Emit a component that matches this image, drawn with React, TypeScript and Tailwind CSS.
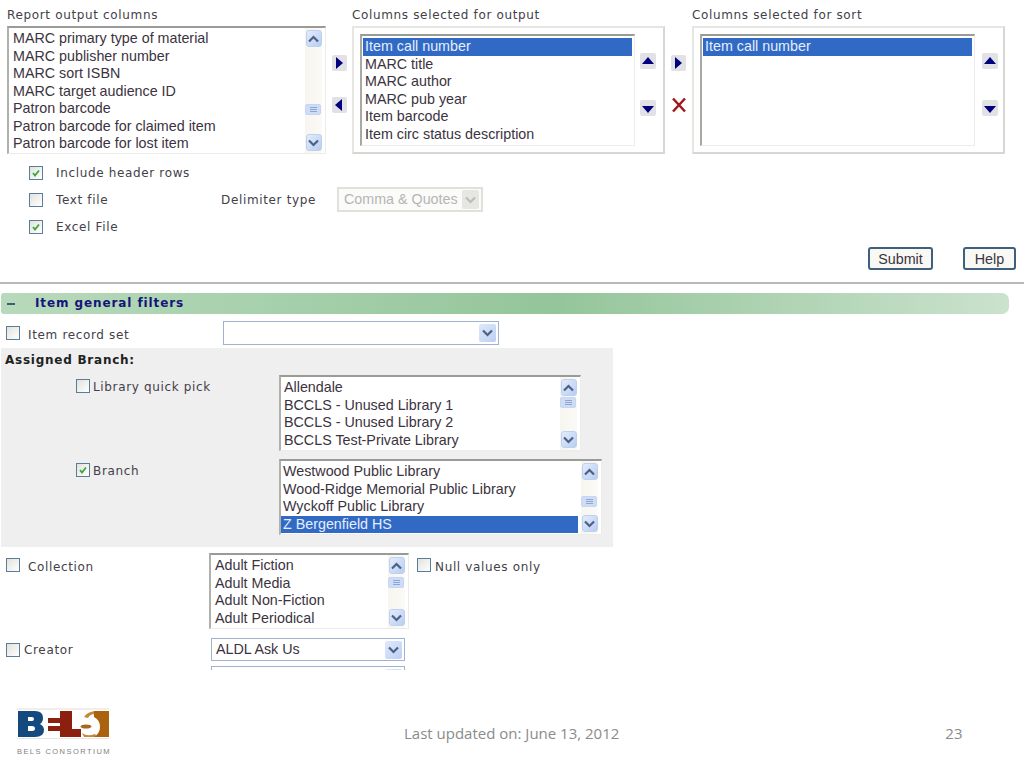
import React from "react";

const V = "font-['DejaVu_Sans',sans-serif]";
const A = "font-['Liberation_Sans',Arial,sans-serif]";

function Chevron({ up, muted }: { up?: boolean; muted?: boolean }) {
  return (
    <svg width="11" height="8" viewBox="0 0 11 8" fill="none">
      <path
        d={up ? "M1 6.5 L5.5 2 L10 6.5" : "M1 1.5 L5.5 6 L10 1.5"}
        stroke={muted ? "#bdbdb8" : "#4d6185"}
        strokeWidth="2.2"
      />
    </svg>
  );
}

function ScrollBtn({ up }: { up?: boolean }) {
  return (
    <div className="w-[16px] h-[17px] shrink-0 rounded-[3px] border border-[#bcd0f0] bg-gradient-to-br from-[#e3ecfc] to-[#b9cdf2] flex items-center justify-center">
      <Chevron up={up} />
    </div>
  );
}

function Scrollbar({ thumbTop }: { thumbTop: number }) {
  return (
    <div className="relative w-[17px] h-full shrink-0 mr-[3px] py-[2px] flex flex-col justify-between items-center bg-gradient-to-r from-[#f6f5ef] to-[#fbfaf6]">
      <ScrollBtn up />
      <div
        className="absolute left-0 w-[16px] h-[11px] rounded-[2px] bg-[#cfdcf6] border border-[#c6d6f4] flex flex-col items-center justify-center gap-[1px]"
        style={{ top: thumbTop }}
      >
        <div className="w-[7px] h-[1px] bg-[#8ea6d0]" />
        <div className="w-[7px] h-[1px] bg-[#8ea6d0]" />
        <div className="w-[7px] h-[1px] bg-[#8ea6d0]" />
      </div>
      <ScrollBtn />
    </div>
  );
}

function Items({ items, selected }: { items: string[]; selected?: string }) {
  return (
    <div className={`${A} text-[14.3px] leading-[17.5px] text-[#3b3340] whitespace-nowrap`}>
      {items.map((t) => (
        <div key={t} className={t === selected ? "bg-[#316ac5] text-[#e6eefc] px-[2px]" : "px-[2px]"}>
          {t}
        </div>
      ))}
    </div>
  );
}

function ScrollList({
  className,
  items,
  selected,
  thumbTop,
  pad,
}: {
  className: string;
  items: string[];
  selected?: string;
  thumbTop: number;
  pad: string;
}) {
  return (
    <div className={`flex bg-white border-t-2 border-l-2 border-t-[#9a9a96] border-l-[#b0b0ac] border-r border-b border-r-[#ececea] border-b-[#ececea] ${className}`}>
      <div className={`flex-1 min-w-0 ${pad}`}>
        <Items items={items} selected={selected} />
      </div>
      <Scrollbar thumbTop={thumbTop} />
    </div>
  );
}

function Check({ on, className = "" }: { on?: boolean; className?: string }) {
  return (
    <div className={`w-[14px] h-[14px] shrink-0 border border-[#5c7c9c] bg-gradient-to-br from-[#e2e2dc] to-white flex items-center justify-center ${className}`}>
      {on && (
        <svg width="10" height="10" viewBox="0 0 10 10" fill="none">
          <path d="M2 5 L4 7.5 L8 2.5" stroke="#3fa63f" strokeWidth="1.8" />
        </svg>
      )}
    </div>
  );
}

function Label({ children, className = "" }: { children: React.ReactNode; className?: string }) {
  return <span className={`${V} text-[12px] tracking-[0.65px] text-[#44404a] whitespace-nowrap ${className}`}>{children}</span>;
}

type Dir = "up" | "down" | "left" | "right";
const tri: Record<Dir, string> = {
  up: "M2 10 L8 3 L14 10 Z",
  down: "M2 5 L14 5 L8 12 Z",
  left: "M10 3 L10 15 L3 9 Z",
  right: "M4 3 L4 15 L11 9 Z",
};

function ArrowBtn({ dir }: { dir: Dir }) {
  const wide = dir === "up" || dir === "down";
  return (
    <div className={`${wide ? "w-[16px] h-[16px]" : "w-[15px] h-[16px]"} rounded-[2px] bg-[#e2e2e6] flex items-center justify-center`}>
      <svg width={wide ? 16 : 15} height={wide ? 15 : 18} viewBox={wide ? "0 0 16 15" : "0 0 15 18"}>
        <path d={tri[dir]} fill="#00007f" />
      </svg>
    </div>
  );
}

function SelectBox({ className, value }: { className: string; value?: string }) {
  return (
    <div className={`flex items-center justify-between border border-[#9fb3cf] bg-white pr-[2px] ${className}`}>
      <span className={`${A} text-[14.3px] text-[#3b3340] pl-[4px]`}>{value}</span>
      <div className="w-[17px] h-[18px] shrink-0 rounded-[2px] bg-gradient-to-br from-[#dfe9fb] to-[#bccff3] flex items-center justify-center">
        <Chevron />
      </div>
    </div>
  );
}

function SortPanel({ items, selected, mid }: { items: string[]; selected: string; mid?: boolean }) {
  return (
    <div className="h-[128px] w-[313px] border-2 border-[#e6e6e2] border-r-[#d6d6d2] border-b-[#d6d6d2] flex pl-[6px] pt-[6px] bg-white">
      <div className="w-[275px] h-[112px] bg-white border-t-2 border-l-2 border-t-[#9a9a96] border-l-[#a8a8a4] border-r border-b border-r-[#ececea] border-b-[#ececea] pl-[1px] pt-[2px] pr-[2px] shrink-0">
        <Items items={items} selected={selected} />
      </div>
      <div className={`flex flex-col ${mid ? "ml-[5px]" : "ml-[7px]"} pt-[19px] gap-[31px]`}>
        <ArrowBtn dir="up" />
        <ArrowBtn dir="down" />
      </div>
    </div>
  );
}

function LogoMark() {
  return (
    <svg width="96" height="33" viewBox="0 0 96 33">
      <rect x="2" y="0.5" width="92" height="1" fill="#e6e0d8" />
      <rect x="2" y="30" width="92" height="1" fill="#e6e6e6" />
      <path
        fillRule="evenodd"
        d="M3 3 H20 Q28 3 28 10 Q28 14 25 16 Q29 18 29 22 Q29 29 20 29 H3 Z M13 9 V13 H17 Q19 13 19 11 Q19 9 17 9 Z M13 18 V23 H17 Q20 23 20 20.5 Q20 18 17 18 Z"
        fill="#154a7f"
      />
      <path d="M33 10 H45 V3 H57 V21 H66 V29 H45 V23 H33 V18 H45 V15 H33 Z" fill="#8c2010" />
      <path d="M69 9 Q72 4 80 3 V6 Q75 6 73 10 Z" fill="#c08a3a" />
      <ellipse cx="71" cy="18.5" rx="5.5" ry="2" fill="#a8691c" />
      <path d="M67 25 Q72 29 80 26 L82 29 H69 Z" fill="#c08a3a" />
      <path d="M79 3 H94 V29 H79 Q85 25 85 19 Q85 12 79 9 Z" fill="#ab620f" />
    </svg>
  );
}

export default function App() {
  return (
    <div className="w-[1024px] h-[768px] overflow-hidden bg-white flex flex-col">
      {/* top columns */}
      <div className="flex pl-[7px]">
        <div className="w-[319px] shrink-0">
          <div className="h-[26px] pt-[4px] leading-[18px]"><Label>Report output columns</Label></div>
          <ScrollList
            className="w-[319px] h-[128px]"
            pad="pl-[2px] pt-[2px]"
            thumbTop={76}
            items={[
              "MARC primary type of material",
              "MARC publisher number",
              "MARC sort ISBN",
              "MARC target audience ID",
              "Patron barcode",
              "Patron barcode for claimed item",
              "Patron barcode for lost item",
            ]}
          />
        </div>
        <div className="w-[26px] shrink-0 pt-[55px] pl-[6px] flex flex-col gap-[26px]">
          <ArrowBtn dir="right" />
          <ArrowBtn dir="left" />
        </div>
        <div className="w-[313px] shrink-0">
          <div className="h-[26px] pt-[4px] leading-[18px]"><Label>Columns selected for output</Label></div>
          <SortPanel
            mid
            selected="Item call number"
            items={["Item call number", "MARC title", "MARC author", "MARC pub year", "Item barcode", "Item circ status description"]}
          />
        </div>
        <div className="w-[27px] shrink-0 pt-[55px] pl-[6px] flex flex-col gap-[26px]">
          <ArrowBtn dir="right" />
          <svg width="16" height="16" viewBox="0 0 16 16" fill="none">
            <path d="M2 1.5 L14 14.5 M14 1.5 L2 14.5" stroke="#a01818" strokeWidth="2.5" />
          </svg>
        </div>
        <div className="w-[313px] shrink-0">
          <div className="h-[26px] pt-[4px] leading-[18px]"><Label>Columns selected for sort</Label></div>
          <SortPanel selected="Item call number" items={["Item call number"]} />
        </div>
      </div>

      {/* output options */}
      <div className="pl-[29px] pt-[5px] flex flex-col">
        <div className="h-[27px] flex items-center">
          <Check on />
          <Label className="ml-[13px]">Include header rows</Label>
        </div>
        <div className="h-[27px] flex items-center">
          <Check />
          <Label className="ml-[13px] w-[165px]">Text file</Label>
          <Label className="w-[116px]">Delimiter type</Label>
          <div className="w-[146px] h-[25px] border-2 border-[#e0e0dc] bg-[#fbfbf9] flex items-center justify-between pr-[2px]">
            <span className={`${A} text-[14.3px] text-[#b5b5b5] pl-[5px]`}>Comma &amp; Quotes</span>
            <div className="w-[17px] h-[19px] bg-[#e6e6e2] flex items-center justify-center rounded-[2px]">
              <Chevron muted />
            </div>
          </div>
        </div>
        <div className="h-[27px] flex items-center">
          <Check on />
          <Label className="ml-[13px]">Excel File</Label>
        </div>
      </div>

      {/* buttons */}
      <div className="mt-[7px] pr-[8px] flex justify-end gap-[30px]">
        <button className={`${A} w-[65px] h-[23px] rounded-[3px] border-2 border-[#3f5f7f] bg-[#f8f8f4] text-[14.3px] text-[#3b3340]`}>Submit</button>
        <button className={`${A} w-[53px] h-[23px] rounded-[3px] border-2 border-[#3f5f7f] bg-[#f8f8f4] text-[14.3px] text-[#3b3340]`}>Help</button>
      </div>

      <div className="mt-[12px] h-[2px] bg-[#b8b8b4] shrink-0" />

      {/* section header */}
      <div className="mt-[9px] ml-[1px] w-[1008px] h-[21px] shrink-0 rounded-l-[3px] rounded-r-[7px] bg-gradient-to-r from-[#b8dabc] via-[#94c59a] via-55% to-[#cbe2cd] flex items-center">
        <span className="ml-[6px] w-[8px] h-[2px] bg-[#3f5f70]" />
        <span className={`${V} ml-[20px] pb-[2px] text-[12px] font-bold tracking-[0.9px] text-[#14147a] whitespace-nowrap`}>Item general filters</span>
      </div>

      {/* item record set */}
      <div className="mt-[7px] h-[24px] flex items-center pl-[6px] shrink-0">
        <Check />
        <Label className="ml-[8px] w-[195px] mt-[3px]">Item record set</Label>
        <SelectBox className="w-[276px] h-[24px]" />
      </div>

      {/* assigned branch */}
      <div className="mt-[3px] ml-[1px] w-[612px] h-[199px] shrink-0 bg-[#efefef] pl-[4px] flex flex-col">
        <div className={`${V} h-[24px] leading-[24px] text-[12px] font-bold tracking-[0.75px] text-[#222]`}>Assigned Branch:</div>
        <div className="mt-[3px] flex">
          <div className="w-[274px] pl-[71px] pt-[2px] flex items-center h-[20px]">
            <Check />
            <Label className="ml-[3px] mt-[1px]">Library quick pick</Label>
          </div>
          <ScrollList
            className="w-[302px] h-[76px]"
            pad="pl-[1px] pt-[2px]"
            thumbTop={20}
            items={["Allendale", "BCCLS - Unused Library 1", "BCCLS - Unused Library 2", "BCCLS Test-Private Library"]}
          />
        </div>
        <div className="mt-[8px] flex">
          <div className="w-[274px] pl-[71px] pt-[2px] flex items-center h-[20px]">
            <Check on />
            <Label className="ml-[3px] mt-[1px]">Branch</Label>
          </div>
          <ScrollList
            className="w-[323px] h-[76px]"
            pad="pt-[2px] pr-[3px]"
            thumbTop={35}
            selected="Z Bergenfield HS"
            items={["Westwood Public Library", "Wood-Ridge Memorial Public Library", "Wyckoff Public Library", "Z Bergenfield HS"]}
          />
        </div>
      </div>

      {/* collection */}
      <div className="mt-[6px] pl-[6px] flex shrink-0 h-[76px]">
        <div className="w-[203px] flex items-center h-[24px]">
          <Check />
          <Label className="ml-[8px] mt-[3px]">Collection</Label>
        </div>
        <ScrollList
          className="w-[200px] h-[76px]"
          pad="pl-[2px] pt-[2px]"
          thumbTop={22}
          items={["Adult Fiction", "Adult Media", "Adult Non-Fiction", "Adult Periodical"]}
        />
        <div className="ml-[8px] flex items-center h-[24px]">
          <Check />
          <Label className="ml-[4px] mt-[3px]">Null values only</Label>
        </div>
      </div>

      {/* creator */}
      <div className="mt-[9px] pl-[6px] flex items-center h-[23px] shrink-0">
        <Check />
        <Label className="ml-[4px] w-[187px] mt-[1px]">Creator</Label>
        <SelectBox className="w-[194px] h-[23px]" value="ALDL Ask Us" />
      </div>
      <div className="mt-[5px] ml-[211px] h-[4px] overflow-hidden shrink-0">
        <SelectBox className="w-[194px] h-[23px]" />
      </div>

      {/* footer */}
      <div className="mt-[38px] pl-[15px] flex items-start">
        <div className="w-[96px] flex flex-col items-center">
          <LogoMark />
          <span className={`${A} mt-[5px] pl-[2px] text-[7.5px] tracking-[1.45px] text-[#7f7f7f] whitespace-nowrap`}>BELS CONSORTIUM</span>
        </div>
        <span className="ml-[293px] mt-[15px] font-['Open_Sans',sans-serif] text-[15px] leading-[20px] text-[#8b8b8b] whitespace-nowrap">Last updated on: June 13, 2012</span>
        <span className="ml-[326px] mt-[15px] font-['Open_Sans',sans-serif] text-[15px] leading-[20px] text-[#8b8b8b]">23</span>
      </div>
    </div>
  );
}
